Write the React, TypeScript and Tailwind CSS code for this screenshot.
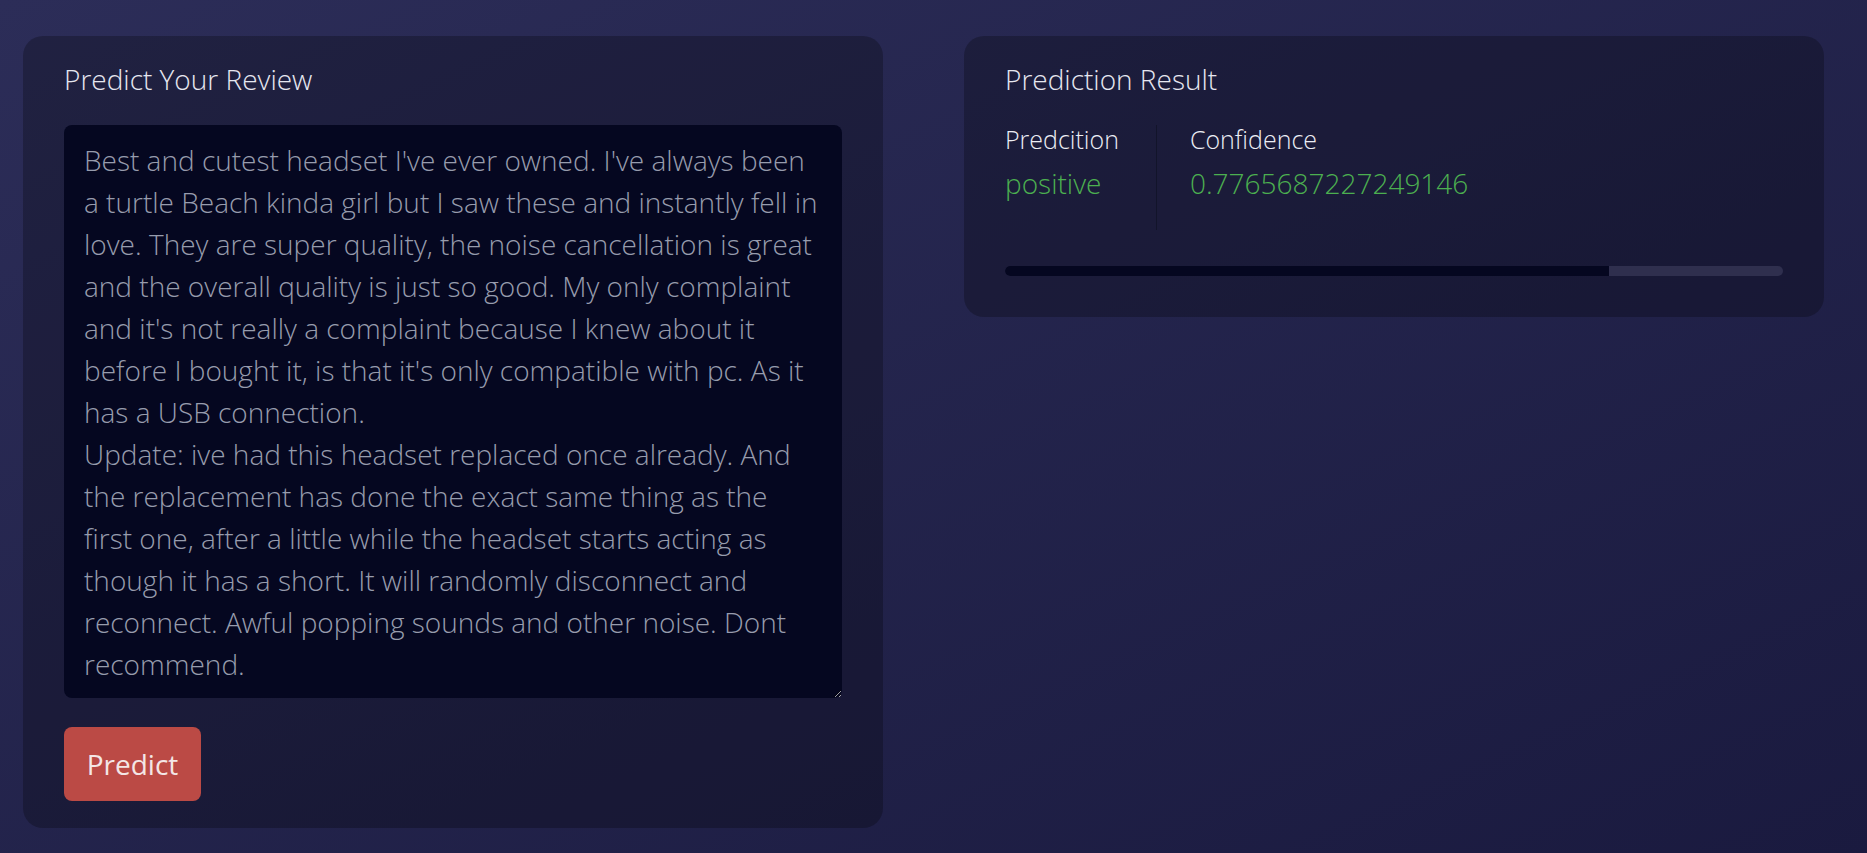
import { useState } from "react"

const review = `Best and cutest headset I've ever owned. I've always been a turtle Beach kinda girl but I saw these and instantly fell in love. They are super quality, the noise cancellation is great and the overall quality is just so good. My only complaint and it's not really a complaint because I knew about it before I bought it, is that it's only compatible with pc. As it has a USB connection.
Update: ive had this headset replaced once already. And the replacement has done the exact same thing as the first one, after a little while the headset starts acting as though it has a short. It will randomly disconnect and reconnect. Awful popping sounds and other noise. Dont recommend.`

const App = () => {
  const [text, setText] = useState<string>(review)
  const confidence = 0.7765687227249146

  return (
    <div className="min-h-screen bg-gradient-to-br from-[#2c2d58] to-[#1a1a3f] font-['Open_Sans',sans-serif] pl-[23px] pr-[43px] pt-[36px] pb-[26px]">
      <div className="grid grid-cols-2 items-start gap-[81px]">
        {/* left: input card */}
        <div className="rounded-[20px] bg-black/25 px-[41px] pt-[22px] pb-[27px]">
          <h2 className="text-[28px] font-light leading-[42px] text-[#e6e7f0]">
            Predict Your Review
          </h2>
          <textarea
            value={text}
            onChange={(e) => setText(e.target.value)}
            className="mt-[25px] block h-[573px] w-full overflow-hidden rounded-[8px] bg-[#050720] px-[20px] pt-[14px] pb-[13px] text-[28px] font-light leading-[42px] text-[#979cad] outline-none"
          />
          <button className="mt-[29px] h-[74px] w-[137px] rounded-[8px] bg-[#bb4a45] text-[28px] text-[#f3e6e6]">
            Predict
          </button>
        </div>

        {/* right: result card */}
        <div className="rounded-[20px] bg-black/25 px-[41px] pt-[22px] pb-[41px]">
          <h2 className="text-[28px] font-light leading-[42px] text-[#e6e7f0]">
            Prediction Result
          </h2>
          <div className="mt-[25px] flex">
            <div className="pr-[37px] pb-[26px]">
              <div className="-mt-[1px] text-[25px] font-light leading-[30px] text-[#eceef5]">Predcition</div>
              <div className="mt-[8px] text-[28px] font-light leading-[42px] text-[#4caf50]">positive</div>
            </div>
            <div className="border-l border-[#12142a] pl-[33px] pb-[26px]">
              <div className="-mt-[1px] text-[25px] font-light leading-[30px] text-[#eceef5]">Confidence</div>
              <div className="mt-[8px] text-[28px] font-light leading-[42px] text-[#4caf50]">{confidence}</div>
            </div>
          </div>
          <div className="mt-[36px] h-[10px] w-full overflow-hidden rounded-full bg-[#2f2f4e]">
            <div className="h-full bg-[#050720]" style={{ width: `${confidence * 100}%` }} />
          </div>
        </div>
      </div>
    </div>
  )
}

export default App
